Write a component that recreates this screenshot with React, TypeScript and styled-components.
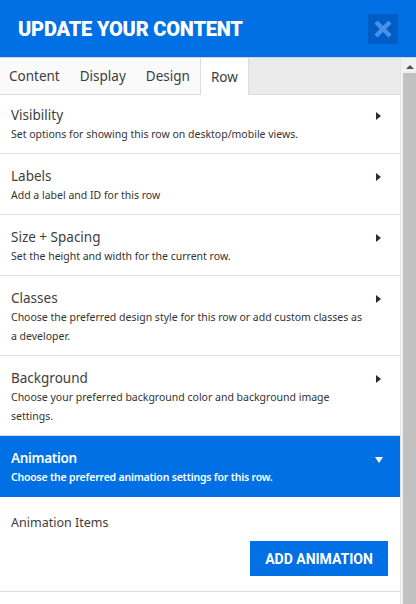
import styled, { createGlobalStyle } from 'styled-components';

const GlobalStyle = createGlobalStyle`
  html, body {
    margin: 0;
    padding: 0;
    background: #ffffff;
  }
  * {
    box-sizing: border-box;
  }
`;

interface SectionItem {
  title: string;
  desc: string;
}

const sections: SectionItem[] = [
  { title: 'Visibility', desc: 'Set options for showing this row on desktop/mobile views.' },
  { title: 'Labels', desc: 'Add a label and ID for this row' },
  { title: 'Size + Spacing', desc: 'Set the height and width for the current row.' },
  {
    title: 'Classes',
    desc: 'Choose the preferred design style for this row or add custom classes as a developer.',
  },
  {
    title: 'Background',
    desc: 'Choose your preferred background color and background image settings.',
  },
];

const tabs = ['Content', 'Display', 'Design', 'Row'];

/** 편집 패널 */
const App = () => {
  return (
    <>
      <GlobalStyle />
      <PanelS>
        <HeaderS>
          <h1>UPDATE YOUR CONTENT</h1>
          <CloseBtnS aria-label='close'>
            <svg width='30' height='30' viewBox='0 0 30 30'>
              <path d='M8 8 L22 22 M22 8 L8 22' stroke='#4591ea' strokeWidth='4.5' />
            </svg>
          </CloseBtnS>
        </HeaderS>
        <BodyS>
          <MainS>
            <TabBarS>
              {tabs.map((tab) => (
                <TabS key={tab} active={tab === 'Row'}>
                  {tab}
                </TabS>
              ))}
            </TabBarS>
            <SectionListS>
              {sections.map((item) => (
                <SectionS key={item.title}>
                  <SectionTextS>
                    <h2>{item.title}</h2>
                    <p>{item.desc}</p>
                  </SectionTextS>
                  <ArrowRightS />
                </SectionS>
              ))}
              <SectionS open>
                <SectionTextS>
                  <h2>Animation</h2>
                  <p>Choose the preferred animation settings for this row.</p>
                </SectionTextS>
                <ArrowDownS />
              </SectionS>
              <ItemsS>
                <p>Animation Items</p>
                <AddBtnS>ADD ANIMATION</AddBtnS>
              </ItemsS>
            </SectionListS>
          </MainS>
          <ScrollBarS>
            <ScrollArrowS />
            <ScrollThumbS />
          </ScrollBarS>
        </BodyS>
      </PanelS>
    </>
  );
};

export default App;

const PanelS = styled.div`
  width: 416px;
  height: 604px;
  display: flex;
  flex-direction: column;
  overflow: hidden;
  font-family: 'Noto Sans', 'Open Sans', sans-serif;
`;

const HeaderS = styled.div`
  height: 57px;
  flex-shrink: 0;
  background: #0070e4;
  display: flex;
  align-items: center;
  justify-content: space-between;
  padding: 0 18px;

  h1 {
    margin: 0;
    font-family: Roboto, 'Liberation Sans', sans-serif;
    font-weight: 900;
    font-size: 20px;
    color: #ffffff;
    letter-spacing: -0.2px;
  }
`;

const CloseBtnS = styled.button`
  width: 30px;
  height: 30px;
  border: none;
  padding: 0;
  background: #005dc6;
  display: flex;
  align-items: center;
  justify-content: center;
`;

const BodyS = styled.div`
  flex: 1;
  display: flex;
  min-height: 0;
  border-top: 1px solid #d4d4d4;
`;

const MainS = styled.div`
  flex: 1;
  display: flex;
  flex-direction: column;
  background: #ffffff;
  border-right: 1px solid #e4e4e4;
`;

const TabBarS = styled.div`
  height: 37px;
  display: flex;
  background: #ebebeb;
  border-bottom: 1px solid #dddddd;
`;

const TabS = styled.div<{ active: boolean }>`
  display: flex;
  align-items: center;
  padding: 0 10px;
  height: ${(props) => (props.active ? '37px' : '36px')};
  font-size: 13.5px;
  color: #3d3d3d;
  background: ${(props) => (props.active ? '#ffffff' : '#fafafa')};
  border-left: ${(props) => (props.active ? '1px solid #dddddd' : 'none')};
  border-right: ${(props) => (props.active ? '1px solid #dddddd' : 'none')};

  &:first-child {
    padding-left: 9px;
  }
`;

const SectionListS = styled.div`
  display: flex;
  flex-direction: column;

  & > div:first-child {
    padding-top: 10px;
  }
`;

const SectionS = styled.div<{ open?: boolean }>`
  display: flex;
  justify-content: space-between;
  align-items: flex-start;
  padding: 12px 19px 9px 11px;
  background: ${(props) => (props.open ? '#0070e4' : '#ffffff')};
  border-bottom: 1px solid ${(props) => (props.open ? '#0070e4' : '#dcdce2')};
  color: ${(props) => (props.open ? '#ffffff' : '#3d3d3d')};

  h2 {
    font-weight: ${(props) => (props.open ? 600 : 400)};
    letter-spacing: ${(props) => (props.open ? '-0.3px' : '0')};
  }
  p {
    font-weight: ${(props) => (props.open ? 600 : 400)};
    letter-spacing: ${(props) => (props.open ? '-0.2px' : '0')};
    color: ${(props) => (props.open ? '#ffffff' : '#333333')};
  }
`;

const SectionTextS = styled.div`
  max-width: 354px;

  h2 {
    margin: 0;
    font-size: 13.5px;
    line-height: 20px;
  }
  p {
    margin: 0;
    font-size: 10.5px;
    line-height: 19px;
  }
`;

const ArrowRightS = styled.span`
  margin-top: 7px;
  width: 0;
  height: 0;
  border-top: 4px solid transparent;
  border-bottom: 4px solid transparent;
  border-left: 5px solid #2a2a3a;
`;

const ArrowDownS = styled.span`
  margin-top: 9px;
  margin-right: -2px;
  width: 0;
  height: 0;
  border-left: 4.5px solid transparent;
  border-right: 4.5px solid transparent;
  border-top: 6px solid #ffffff;
`;

const ItemsS = styled.div`
  display: flex;
  flex-direction: column;
  padding: 17px 12px 15px 11px;
  border-bottom: 1px solid #dcdcdc;

  p {
    margin: 0;
    font-size: 12.5px;
    line-height: 18px;
    color: #3d3d3d;
  }
`;

const AddBtnS = styled.button`
  align-self: flex-end;
  margin-top: 9px;
  width: 138px;
  height: 35px;
  border: none;
  background: #0070e4;
  color: #ffffff;
  font-family: Roboto, 'Liberation Sans', sans-serif;
  font-weight: 700;
  font-size: 14px;
`;

const ScrollBarS = styled.div`
  width: 15px;
  display: flex;
  flex-direction: column;
  align-items: center;
  background: #f1f1f1;
  padding-left: 2px;
`;

const ScrollArrowS = styled.span`
  margin-top: 7px;
  width: 0;
  height: 0;
  border-left: 4px solid transparent;
  border-right: 4px solid transparent;
  border-bottom: 4px solid #505050;
`;

const ScrollThumbS = styled.div`
  margin-top: 4px;
  width: 100%;
  flex: 1;
  background: #c1c1c1;
`;
